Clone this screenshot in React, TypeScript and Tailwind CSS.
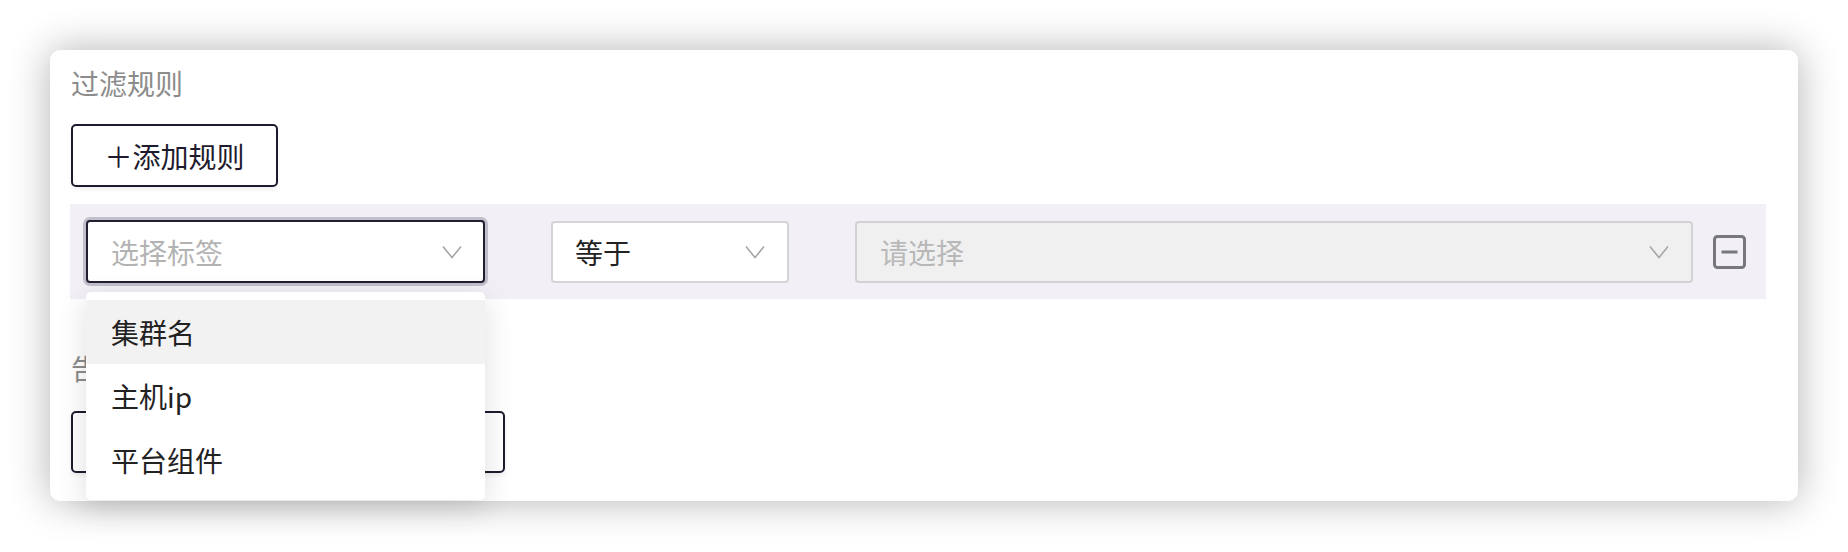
import React from "react";

const FONT = { fontFamily: '"Noto Sans CJK SC", "Noto Sans", sans-serif' };

function Chevron() {
  return (
    <svg width="20" height="14" viewBox="0 0 20 14" fill="none">
      <polyline points="1,1.5 10,12.5 19,1.5" stroke="#a3a3a3" strokeWidth="1.5" />
    </svg>
  );
}

function MinusSquare() {
  return (
    <svg width="33" height="34" viewBox="0 0 33 34" fill="none">
      <rect x="1.5" y="1.5" width="30" height="31" rx="3" stroke="#78777e" strokeWidth="3" />
      <line x1="8.5" y1="17" x2="24.5" y2="17" stroke="#78777e" strokeWidth="3" />
    </svg>
  );
}

const OPTIONS = ["集群名", "主机ip", "平台组件"];

export default function App() {
  return (
    <div className="w-[1848px] h-[552px] bg-white pt-[50px] pl-[50px]" style={FONT}>
      <div className="relative w-[1748px] h-[451px] rounded-[10px] bg-white shadow-[0_0_40px_rgba(0,0,0,0.3)] pl-[21px] pt-[15px]">
        {/* 过滤规则 */}
        <div className="text-[28px] leading-[36px] text-[#8c8c8c]">过滤规则</div>

        <button className="mt-[23px] w-[207px] h-[63px] flex items-center justify-center border-2 border-[#1e1b2e] rounded-[5px] text-[28px] text-[#1e1b2e] shadow-[0_3px_4px_rgba(0,0,0,0.06)]">
          ＋添加规则
        </button>

        {/* rule row */}
        <div className="relative mt-[17px] -ml-px w-[1696px] h-[95px] bg-[#f2f0f6] flex items-center pl-[16px]">
          <div className="relative">
            <div className="w-[399px] h-[63px] border-2 border-[#221f33] ring-[3px] ring-[#c2bfcb] rounded-[4px] bg-white flex items-center justify-between pl-[23px] pr-[21px]">
              <span className="text-[28px] text-[#b3b3b3]">选择标签</span>
              <Chevron />
            </div>
            {/* dropdown */}
            <div className="absolute left-0 top-[72px] z-10 w-[399px] bg-white rounded-[5px] py-[8px] shadow-[0_8px_30px_rgba(0,0,0,0.13)]">
              {OPTIONS.map((o, i) => (
                <div
                  key={o}
                  className={
                    "h-[64px] flex items-center pl-[25px] text-[28px] text-[#222222] " +
                    (i === 0 ? "bg-[#f2f2f2]" : "")
                  }
                >
                  {o}
                </div>
              ))}
            </div>
          </div>

          <div className="ml-[66px] w-[238px] h-[62px] border-2 border-[#d4d4d4] rounded-[4px] bg-white flex items-center justify-between pl-[22px] pr-[22px]">
            <span className="text-[28px] text-[#222222]">等于</span>
            <Chevron />
          </div>

          <div className="ml-[66px] w-[838px] h-[62px] border-2 border-[#d2d2d2] rounded-[4px] bg-[#f0f0f0] flex items-center justify-between pl-[23px] pr-[22px]">
            <span className="text-[28px] text-[#b8b8b8]">请选择</span>
            <Chevron />
          </div>

          <div className="ml-[20px] flex items-center">
            <MinusSquare />
          </div>
        </div>

        {/* section hidden behind dropdown */}
        <div className="mt-[51px] text-[28px] leading-[36px] text-[#8c8c8c]">告警规则</div>
        <div className="mt-[25px] w-[434px] h-[62px] border-2 border-[#1e1b2e] rounded-[5px] shadow-[0_3px_4px_rgba(0,0,0,0.06)]" />
      </div>
    </div>
  );
}
